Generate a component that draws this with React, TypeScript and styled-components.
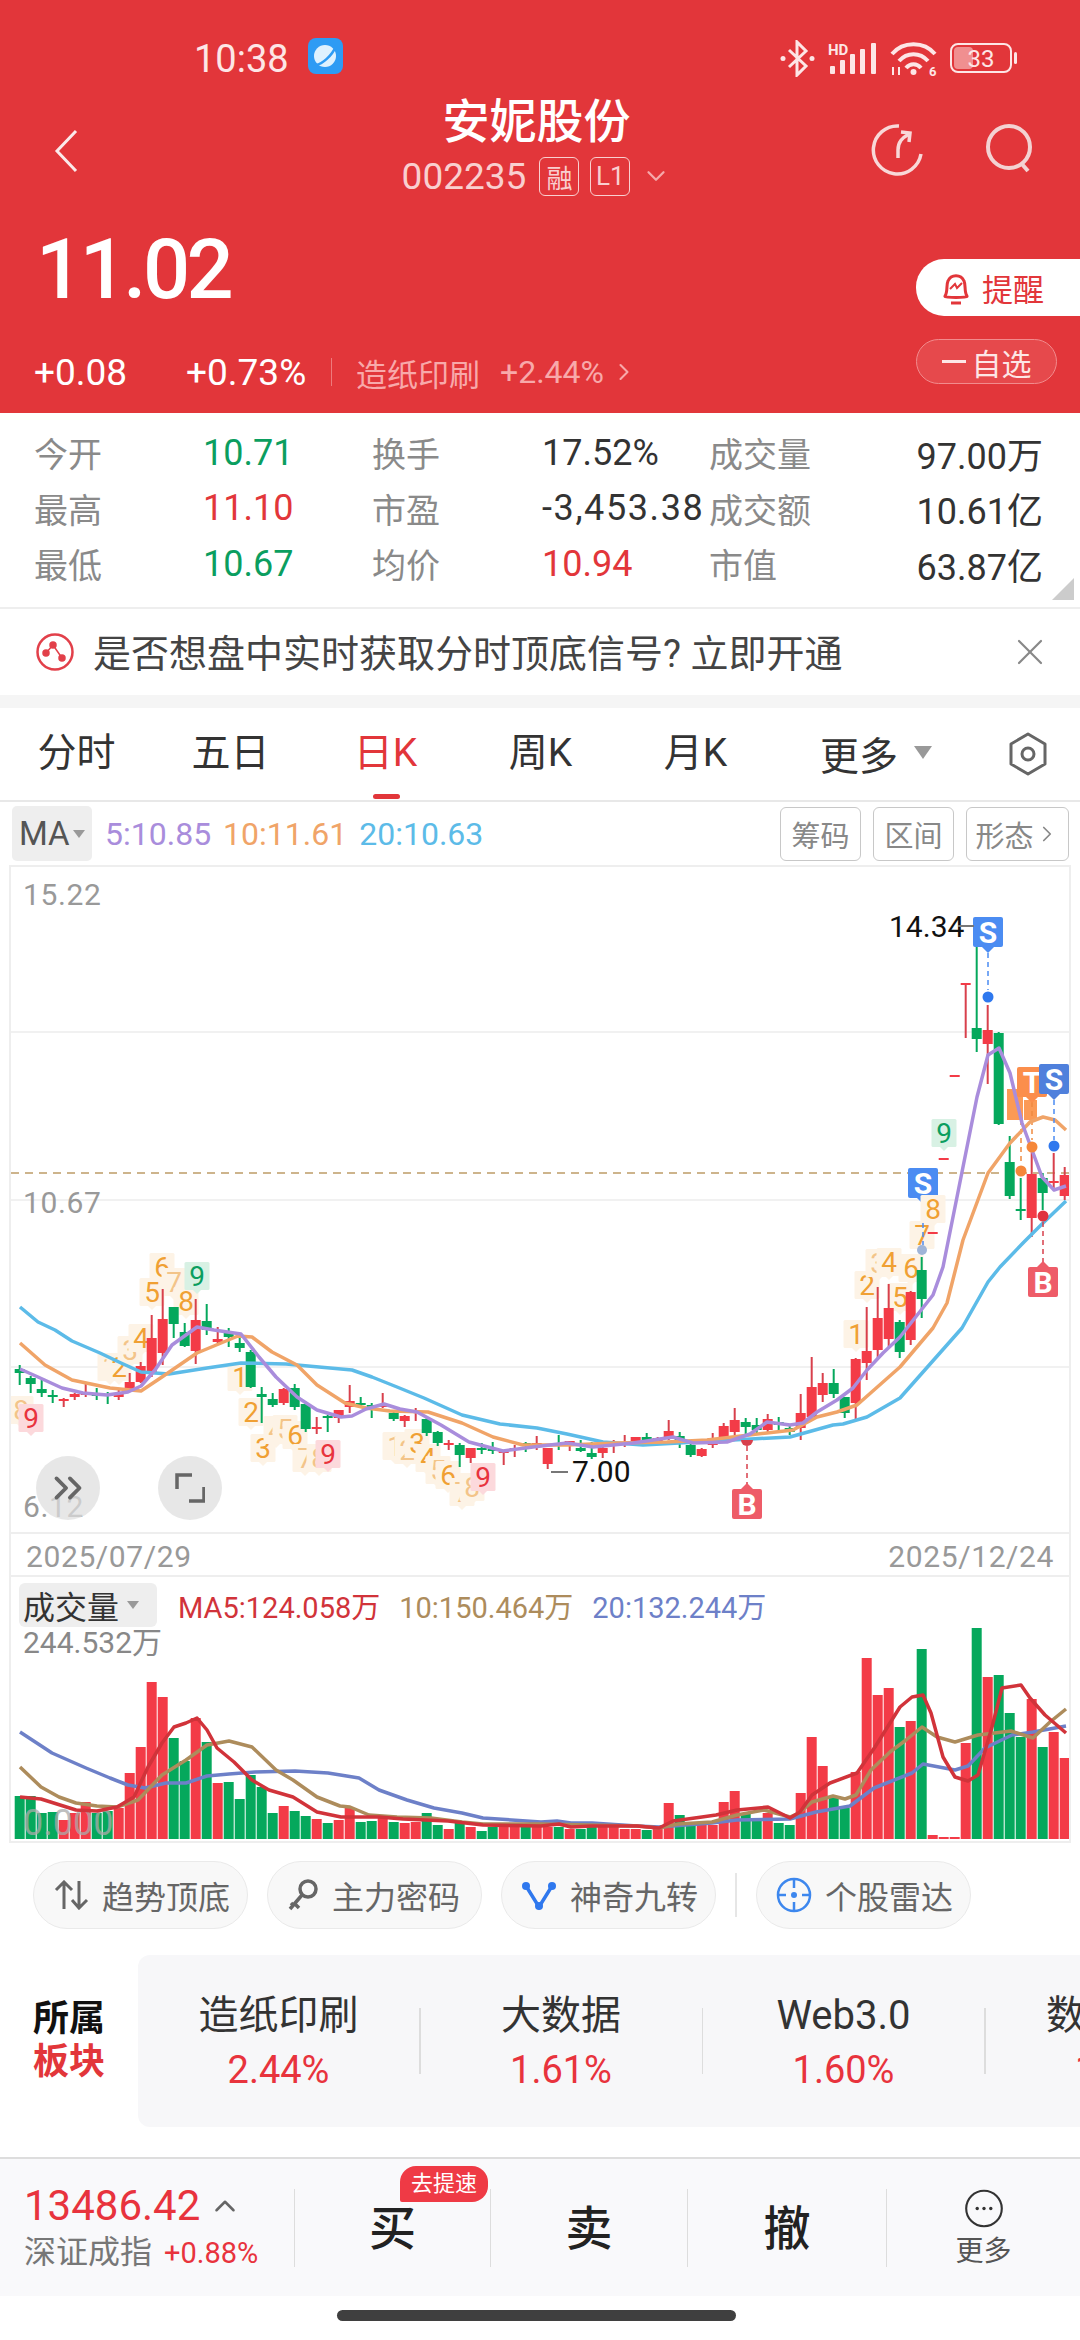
import styled, { createGlobalStyle } from 'styled-components';
import { ChevronDown, ChevronRight, ChevronUp, ChevronsRight, X } from 'lucide-react';

const RED = '#e2363a';
const UP = '#f33b47';
const DOWN = '#05a85c';

const GlobalStyle = createGlobalStyle`
    html, body {
        margin: 0;
        padding: 0;
        background: #fff;
    }
    body {
        font-family: Roboto, "Noto Sans CJK SC", sans-serif;
        color: #333;
    }
    * {
        box-sizing: border-box;
    }
`;

const Page = styled.div`
    width: 1080px;
    height: 2340px;
    overflow: hidden;
    background: #fff;
`;

/* ---------- header ---------- */

const Header = styled.header`
    height: 413px;
    background: ${RED};
    color: #fff;
    display: flex;
    flex-direction: column;
`;

const StatusBar = styled.div`
    height: 92px;
    padding: 38px 62px 0 194px;
    display: flex;
    align-items: flex-start;
`;

const Clock = styled.span`
    font-size: 38px;
    line-height: 42px;
    color: #fde6e6;
    margin-right: 19px;
`;

const StatusIcons = styled.div`
    margin-left: auto;
    display: flex;
    align-items: center;
    gap: 13px;
    height: 40px;
`;

const NavBar = styled.div`
    height: 110px;
    padding: 0 47px 0 54px;
    display: grid;
    grid-template-columns: 186px 1fr 200px;
    align-items: center;
`;

const BackIcon = styled.svg`
    margin-top: 8px;
`;

const NavIcons = styled.div`
    display: flex;
    justify-content: flex-end;
    gap: 62px;
    padding-top: 6px;
`;

const TitleBlock = styled.div`
    display: flex;
    flex-direction: column;
    align-items: center;
`;

const Title = styled.div`
    font-size: 47px;
    line-height: 58px;
    font-weight: 500;
    margin: -4px 0 4px;
`;

const CodeRow = styled.div`
    display: flex;
    align-items: center;
    height: 42px;
    color: #f9cfcf;
`;

const Code = styled.span`
    font-size: 37px;
    margin-right: 13px;
`;

const CodeBadge = styled.span`
    width: 40px;
    height: 39px;
    margin-right: 11px;
    border: 1.5px solid #f9cfcf;
    border-radius: 6px;
    display: flex;
    align-items: center;
    justify-content: center;
    font-size: 26px;
`;

const Quote = styled.div`
    flex: 1;
    display: flex;
    justify-content: space-between;
    padding-left: 34px;
`;

const QuoteLeft = styled.div`
    display: flex;
    flex-direction: column;
`;

const Price = styled.div`
    margin: 26px 0 0 2px;
    font-size: 83px;
    line-height: 83px;
    font-weight: 500;
    letter-spacing: -3.5px;
`;

const ChangeRow = styled.div`
    margin-top: 41px;
    display: flex;
    align-items: center;
    height: 40px;
`;

const Change = styled.span<{ $width: number }>`
    width: ${(p) => p.$width}px;
    font-size: 37px;
`;

const ChangeDivider = styled.span`
    width: 1px;
    height: 28px;
    margin: 0 24px 0 25px;
    background: #ee7a7c;
`;

const SectorLink = styled.span`
    font-size: 31px;
    color: #f8a9aa;
    display: flex;
    align-items: center;
`;

const SectorGain = styled.span`
    margin-left: 20px;
    font-size: 32px;
    margin-right: 6px;
`;

const QuoteRight = styled.div`
    padding-top: 57px;
    width: 164px;
    display: flex;
    flex-direction: column;
`;

const RemindPill = styled.div`
    height: 57px;
    background: #fff;
    color: ${RED};
    border-radius: 28px 0 0 28px;
    display: flex;
    align-items: center;
    padding-left: 24px;
    gap: 10px;
    font-size: 31px;
`;

const WatchPill = styled.div`
    width: 141px;
    height: 45px;
    margin-top: 23px;
    border: 1.5px solid #f28b8d;
    border-radius: 23px;
    background: #e6494c;
    color: #fde6e6;
    display: flex;
    align-items: center;
    justify-content: center;
    font-size: 30px;
    gap: 6px;
`;

const WatchMinus = styled.span`
    width: 24px;
    height: 3px;
    background: #fde6e6;
`;

/* ---------- stats ---------- */

const Stats = styled.section`
    position: relative;
    height: 194px;
    padding: 12px 37px 0 34px;
    display: grid;
    grid-template-columns: 169px 169px 170px 167px 160px 1fr;
    grid-auto-rows: 55.5px;
    align-items: center;
`;

const StatLabel = styled.span`
    font-size: 34px;
    color: #8a8a8a;
`;

const StatValue = styled.span<{ $tone?: 'up' | 'down'; $end?: boolean; $wide?: boolean }>`
    font-size: 36px;
    color: ${(p) => (p.$tone === 'up' ? RED : p.$tone === 'down' ? '#0b9e5f' : '#333')};
    text-align: ${(p) => (p.$end ? 'right' : 'left')};
    letter-spacing: ${(p) => (p.$wide ? '1.6px' : '0')};
    white-space: nowrap;
`;

const StatCorner = styled.span`
    position: absolute;
    right: 6px;
    bottom: 7px;
    border-style: solid;
    border-width: 0 0 22px 22px;
    border-color: transparent transparent #ccc transparent;
`;

/* ---------- banner ---------- */

const Banner = styled.section`
    height: 88px;
    border-top: 2px solid #eee;
    padding: 0 28px 0 36px;
    display: flex;
    align-items: center;
    margin-bottom: 13px;
    box-shadow: 0 13px 0 #f5f5f5;
`;

const BannerText = styled.span`
    margin: -4px 0 0 19px;
    font-size: 38px;
    color: #444;
    flex: 1;
    white-space: nowrap;
`;

/* ---------- period tabs ---------- */

const Tabs = styled.nav`
    height: 94px;
    border-bottom: 2px solid #e8e8e8;
    display: grid;
    grid-template-columns: 153px repeat(4, 155px) 1fr 18px 71px;
    align-items: center;
    font-size: 39px;
    color: #333;
`;

const Tab = styled.div<{ $active?: boolean }>`
    position: relative;
    height: 92px;
    line-height: 90px;
    text-align: center;
    color: ${(p) => (p.$active ? RED : '#333')};

    &::after {
        content: '';
        display: ${(p) => (p.$active ? 'block' : 'none')};
        position: absolute;
        left: 50%;
        bottom: 1px;
        width: 27px;
        height: 5px;
        margin-left: -13px;
        border-radius: 3px;
        background: ${RED};
    }
`;

const TabMore = styled.div`
    padding-left: 47px;
    margin-top: -3px;
    display: flex;
    align-items: center;
    gap: 16px;
    white-space: nowrap;
`;

const DownCaret = styled.span<{ $size: number }>`
    border-style: solid;
    border-width: ${(p) => p.$size}px ${(p) => p.$size * 0.75}px 0 ${(p) => p.$size * 0.75}px;
    border-color: #999 transparent transparent transparent;
`;

/* ---------- MA row ---------- */

const MaRow = styled.div`
    height: 63px;
    padding: 0 11px 0 12px;
    display: flex;
    align-items: center;
`;

const MaChip = styled.div`
    width: 80px;
    height: 55px;
    background: #eee;
    border-radius: 5px;
    display: flex;
    align-items: center;
    padding-left: 7px;
    gap: 3px;
    font-size: 33px;
    color: #555;
    margin-right: 13px;
`;

const MaValue = styled.span<{ $color: string }>`
    font-size: 32px;
    color: ${(p) => p.$color};
    margin-right: 12px;
`;

const ChartButtons = styled.div`
    margin-left: auto;
    display: flex;
    gap: 12px;
`;

const ChartButton = styled.div<{ $width: number }>`
    width: ${(p) => p.$width}px;
    height: 54px;
    border: 1.5px solid #c8c8c8;
    border-radius: 6px;
    display: flex;
    align-items: center;
    justify-content: center;
    font-size: 29px;
    color: #888;
`;

/* ---------- charts ---------- */

const ChartPanel = styled.section`
    position: relative;
    height: 712px;
    margin: 0 9px;
    border: 2px solid #eee;
`;

const ChartSvg = styled.svg`
    display: block;
`;

const RoundButton = styled.div<{ $left: number }>`
    position: absolute;
    left: ${(p) => p.$left}px;
    top: 589px;
    width: 64px;
    height: 64px;
    border-radius: 50%;
    background: rgba(222, 222, 222, 0.72);
    display: flex;
    align-items: center;
    justify-content: center;
    color: #666;
`;

const AxisText = styled.text`
    font-size: 30px;
    fill: #999;
    letter-spacing: 0.6px;
`;

const ExtremeText = styled.text`
    font-size: 30px;
    fill: #111;
`;

const TagDigit = styled.text<{ $color: string }>`
    font-size: 28px;
    text-anchor: middle;
    fill: ${(p) => p.$color};
`;

const SignalLetter = styled.text`
    font-size: 30px;
    font-weight: 700;
    text-anchor: middle;
    fill: #fff;
`;

const VolumePanel = styled.section`
    margin: 0 9px;
    height: 266px;
    border: solid #eee;
    border-width: 0 2px 2px;
`;

const VolumeHeader = styled.div`
    height: 50px;
    padding: 6px 0 0 8px;
    display: flex;
    align-items: center;
`;

const VolumeChip = styled.div`
    width: 138px;
    height: 44px;
    margin-right: 21px;
    background: #eee;
    border-radius: 6px;
    display: flex;
    align-items: center;
    padding-left: 4px;
    gap: 8px;
    font-size: 32px;
    color: #333;
`;

const VolumeValue = styled.span<{ $color: string }>`
    font-size: 29px;
    color: ${(p) => p.$color};
    margin-right: 19px;
`;

const VolumeMax = styled.text`
    font-size: 30px;
    fill: #888;
`;

const VolumeZero = styled.text`
    font-size: 36px;
    fill: #aaa;
    fill-opacity: 0.75;
`;

/* ---------- tool pills ---------- */

const ToolRow = styled.div`
    margin-top: 18px;
    height: 68px;
    padding-left: 33px;
    display: flex;
    align-items: center;
    gap: 19px;
`;

const ToolPill = styled.div`
    width: 215px;
    height: 68px;
    border: 1.5px solid #eaeaea;
    border-radius: 34px;
    background: #f8f8f8;
    display: flex;
    align-items: center;
    padding-left: 19px;
    gap: 13px;
    font-size: 32px;
    color: #666;
    white-space: nowrap;
`;

const ToolDivider = styled.span`
    width: 2px;
    height: 44px;
    background: #e6e6e6;
`;

/* ---------- sectors ---------- */

const SectorRow = styled.section`
    margin-top: 26px;
    height: 172px;
    display: flex;
`;

const SectorHead = styled.div`
    width: 138px;
    padding-left: 33px;
    display: flex;
    flex-direction: column;
    justify-content: center;
    font-size: 36px;
    line-height: 43px;
    font-weight: 700;
    color: #111;
`;

const SectorHeadAccent = styled.span`
    color: ${RED};
`;

const SectorCard = styled.div`
    flex: 1;
    background: #f7f7f9;
    border-radius: 12px 0 0 12px;
    display: flex;
    align-items: center;
    overflow: hidden;
`;

const SectorItem = styled.div`
    flex: none;
    width: 281px;
    display: flex;
    flex-direction: column;
    align-items: center;
    white-space: nowrap;
`;

const SectorName = styled.span`
    font-size: 40px;
    line-height: 50px;
    color: #333;
`;

const SectorPct = styled.span`
    margin-top: 7px;
    font-size: 38px;
    line-height: 44px;
    color: #e8333d;
`;

const SectorDivider = styled.span`
    flex: none;
    width: 1.5px;
    height: 66px;
    background: #ddd;
`;

/* ---------- bottom bar ---------- */

const BottomBar = styled.footer`
    margin-top: 30px;
    height: 139px;
    border-top: 2px solid #ddd;
    background: #f9f9fb;
    display: flex;
    align-items: center;
`;

const IndexBlock = styled.div`
    width: 294px;
    padding-left: 24px;
    display: flex;
    flex-direction: column;
`;

const IndexValue = styled.div`
    font-size: 42px;
    line-height: 46px;
    color: #e8333d;
    display: flex;
    align-items: center;
    gap: 8px;
`;

const IndexName = styled.div`
    margin-top: 4px;
    display: flex;
    align-items: baseline;
    gap: 12px;
    font-size: 32px;
    line-height: 38px;
    color: #777;
`;

const IndexChange = styled.span`
    font-size: 29px;
    color: #e8333d;
`;

const Action = styled.div<{ $width: number }>`
    position: relative;
    width: ${(p) => p.$width}px;
    height: 78px;
    border-left: 1.5px solid #ddd;
    display: flex;
    flex-direction: column;
    align-items: center;
    justify-content: center;
    font-size: 47px;
    font-weight: 500;
    color: #222;
`;

const ActionLabel = styled.span`
    margin-top: -6px;
`;

const SpeedTag = styled.span`
    position: absolute;
    left: 105px;
    top: -23px;
    width: 88px;
    height: 36px;
    border-radius: 16px 16px 16px 2px;
    background: #ef3a45;
    color: #fff;
    font-size: 22px;
    font-weight: 400;
    line-height: 36px;
    text-align: center;
`;

const MoreLabel = styled.span`
    margin-top: 9px;
    font-size: 28px;
    line-height: 30px;
    font-weight: 400;
    color: #555;
`;

const HomeZone = styled.div`
    height: 44px;
    padding: 14px 7px 0 0;
    display: flex;
    justify-content: center;
`;

const HomePill = styled.span`
    width: 399px;
    height: 11px;
    border-radius: 6px;
    background: #3f3f3f;
`;

/* ---------- data ---------- */

type Candle = [number, number, number, number, 'r' | 'g'];

const candles: Candle[] = [
    [1365, 1369, 1373, 1385, 'g'], [1376, 1378, 1384, 1393, 'g'], [1380, 1389, 1393, 1397, 'g'], [1390, 1395, 1397, 1403, 'g'],
    [1398, 1399, 1401, 1407, 'r'], [1393, 1394, 1397, 1400, 'r'], [1382, 1393, 1395, 1397, 'r'], [1388, 1393, 1396, 1400, 'g'],
    [1392, 1394, 1396, 1404, 'g'], [1388, 1393, 1397, 1400, 'r'], [1373, 1382, 1391, 1392, 'r'], [1362, 1366, 1382, 1383, 'r'],
    [1315, 1338, 1372, 1377, 'r'], [1289, 1319, 1353, 1365, 'r'], [1307, 1307, 1324, 1338, 'g'], [1323, 1332, 1346, 1347, 'g'],
    [1299, 1320, 1351, 1364, 'r'], [1304, 1321, 1330, 1335, 'g'], [1327, 1339, 1342, 1343, 'r'], [1328, 1333, 1337, 1347, 'g'],
    [1337, 1343, 1348, 1352, 'g'], [1350, 1352, 1387, 1388, 'g'], [1387, 1394, 1397, 1423, 'g'], [1393, 1399, 1405, 1407, 'g'],
    [1388, 1389, 1403, 1405, 'r'], [1384, 1388, 1407, 1410, 'g'], [1403, 1404, 1429, 1432, 'g'], [1417, 1427, 1429, 1434, 'r'],
    [1415, 1416, 1417, 1432, 'g'], [1410, 1410, 1418, 1423, 'r'], [1385, 1401, 1407, 1413, 'r'], [1397, 1403, 1405, 1408, 'g'],
    [1403, 1405, 1406, 1418, 'g'], [1393, 1405, 1407, 1408, 'r'], [1412, 1413, 1419, 1421, 'g'], [1415, 1416, 1421, 1427, 'r'],
    [1408, 1411, 1413, 1421, 'r'], [1418, 1419, 1433, 1436, 'g'], [1431, 1432, 1443, 1446, 'g'], [1440, 1443, 1445, 1450, 'r'],
    [1443, 1445, 1455, 1467, 'g'], [1448, 1448, 1458, 1463, 'r'], [1443, 1448, 1450, 1454, 'g'], [1442, 1449, 1451, 1454, 'g'],
    [1450, 1451, 1452, 1465, 'r'], [1445, 1448, 1450, 1457, 'r'], [1442, 1443, 1445, 1452, 'g'], [1436, 1443, 1446, 1450, 'r'],
    [1448, 1448, 1464, 1469, 'r'], [1435, 1444, 1446, 1450, 'g'], [1441, 1441, 1443, 1451, 'r'], [1440, 1448, 1451, 1452, 'g'],
    [1442, 1453, 1457, 1459, 'g'], [1447, 1448, 1453, 1458, 'r'], [1440, 1443, 1445, 1453, 'r'], [1435, 1442, 1445, 1447, 'r'],
    [1437, 1437, 1442, 1445, 'r'], [1433, 1437, 1441, 1445, 'g'], [1437, 1438, 1443, 1445, 'r'], [1420, 1431, 1438, 1440, 'r'],
    [1432, 1436, 1442, 1448, 'g'], [1440, 1445, 1455, 1457, 'g'], [1448, 1449, 1456, 1457, 'r'], [1433, 1438, 1445, 1448, 'r'],
    [1423, 1426, 1437, 1440, 'r'], [1408, 1420, 1432, 1435, 'r'], [1418, 1422, 1427, 1437, 'g'], [1418, 1425, 1430, 1433, 'g'],
    [1414, 1419, 1430, 1432, 'r'], [1417, 1422, 1425, 1432, 'g'], [1425, 1428, 1432, 1435, 'g'], [1394, 1413, 1428, 1440, 'r'],
    [1357, 1387, 1417, 1420, 'r'], [1373, 1383, 1395, 1402, 'r'], [1369, 1383, 1394, 1398, 'g'], [1397, 1397, 1413, 1418, 'g'],
    [1358, 1359, 1403, 1420, 'r'], [1307, 1351, 1363, 1380, 'r'], [1287, 1318, 1350, 1360, 'r'], [1284, 1308, 1339, 1348, 'r'],
    [1320, 1322, 1352, 1358, 'g'], [1291, 1292, 1340, 1345, 'r'], [1257, 1270, 1299, 1318, 'g'], [1232, 1232, 1233, 1234, 'r'],
    [1158, 1158, 1159, 1159, 'r'], [1075, 1075, 1076, 1076, 'r'], [983, 983, 984, 1038, 'r'], [928, 1028, 1039, 1052, 'g'],
    [1005, 1030, 1044, 1084, 'r'], [1032, 1033, 1124, 1125, 'g'], [1136, 1162, 1196, 1199, 'g'], [1178, 1209, 1211, 1220, 'g'],
    [1147, 1174, 1218, 1237, 'r'], [1173, 1178, 1193, 1210, 'g'], [1153, 1181, 1183, 1190, 'r'], [1167, 1175, 1196, 1200, 'r'],
];

const volumeTops = [
    1796, 1796, 1813, 1812, 1820, 1813, 1802, 1813, 1811, 1808, 1773, 1747, 1682, 1697, 1738, 1761,
    1718, 1742, 1783, 1782, 1799, 1775, 1787, 1813, 1806, 1811, 1816, 1819, 1823, 1820, 1808, 1822,
    1821, 1817, 1822, 1823, 1822, 1813, 1825, 1829, 1822, 1827, 1831, 1827, 1827, 1826, 1827, 1827,
    1827, 1827, 1829, 1829, 1827, 1827, 1827, 1829, 1829, 1830, 1829, 1803, 1815, 1823, 1825, 1825,
    1802, 1791, 1813, 1820, 1813, 1823, 1825, 1793, 1737, 1766, 1798, 1808, 1772, 1658, 1695, 1688,
    1727, 1721, 1649, 1835, 1837, 1837, 1743, 1628, 1677, 1675, 1713, 1737, 1699, 1747, 1732, 1758,
];

const volumeColors =
    'ggggrrrggrrrrrggrgrgggggrggrgrrggrgrrggrgrggrrgr' + 'rgrggrrrrgrrggrrrrggrggrrrggrrrrgrgrrrrgrgggrgrr';

const candleX = (i: number) => 19.7 + 11 * i;

const ma20 = '20,1307 38,1322 55,1330 72,1341 100,1353 121,1363 141,1372 169,1374 207,1368 241,1363 286,1364 352,1370 372,1377 397,1387 424,1398 462,1415 500,1424 537,1428 567,1434 603,1442 643,1445 733,1440 790,1437 833,1425 843,1424 867,1417 900,1398 962,1328 988,1282 1000,1267 1023,1243 1043,1223 1066,1201';
const ma10 = '20,1343 45,1365 72,1380 110,1388 141,1391 162,1377 197,1353 238,1336 252,1337 272,1352 297,1365 317,1385 345,1403 366,1408 390,1411 428,1412 462,1423 493,1437 523,1445 567,1445 617,1443 667,1442 707,1440 767,1433 793,1430 817,1417 837,1412 857,1405 900,1367 933,1328 947,1303 963,1240 988,1173 1010,1143 1030,1122 1043,1117 1055,1120 1066,1130';
const ma5 = '20,1369 38,1377 62,1388 83,1393 107,1395 128,1392 141,1386 155,1370 172,1345 197,1327 214,1330 241,1334 259,1357 276,1377 297,1397 317,1410 341,1417 352,1416 366,1409 384,1404 400,1409 417,1412 441,1425 469,1442 503,1451 533,1447 567,1443 593,1447 633,1443 673,1437 693,1443 727,1442 750,1434 767,1422 790,1425 803,1423 817,1412 837,1400 853,1388 867,1370 883,1353 900,1337 907,1328 933,1295 943,1267 957,1197 977,1097 988,1055 999,1048 1010,1073 1022,1123 1042,1177 1054,1190 1066,1186';

const volMa5 = '20,1797 41,1799 76,1810 97,1811 117,1807 134,1797 148,1767 162,1743 174,1727 186,1723 197,1718 207,1730 217,1748 234,1762 252,1780 269,1790 293,1797 317,1812 341,1817 379,1817 403,1819 448,1821 483,1825 541,1826 559,1824 571,1827 592,1826 637,1826 659,1828 673,1821 702,1817 716,1815 737,1810 768,1807 790,1818 800,1812 812,1795 830,1783 857,1773 875,1747 900,1707 912,1697 923,1695 931,1713 943,1757 955,1777 968,1781 978,1775 992,1727 1002,1688 1021,1685 1030,1698 1045,1715 1066,1733';
const volMa10 = '20,1767 41,1787 59,1797 76,1803 97,1806 117,1807 138,1800 162,1775 186,1760 207,1745 229,1741 252,1747 276,1770 293,1780 317,1797 340,1806 350,1807 369,1815 397,1817 431,1818 462,1822 483,1824 541,1824 637,1826 659,1828 678,1824 712,1822 737,1815 764,1810 790,1817 799,1813 812,1802 833,1796 845,1799 856,1795 871,1770 890,1752 906,1740 922,1727 937,1737 955,1742 978,1735 1011,1731 1033,1738 1050,1722 1066,1709';
const volMa20 = '20,1732 52,1753 86,1768 110,1778 128,1785 145,1788 166,1783 186,1783 207,1776 229,1774 255,1772 295,1771 328,1773 359,1778 379,1790 407,1800 434,1808 462,1813 483,1818 541,1822 557,1821 571,1823 592,1823 637,1826 659,1827 712,1823 737,1820 790,1819 816,1812 850,1806 874,1788 912,1773 923,1764 955,1770 968,1766 985,1748 1012,1735 1033,1732 1066,1726';

type TagKind = 'solid' | 'faint' | 'red' | 'green';

const digitTags: [string, number, number, TagKind][] = [
    ['8', 21, 1410, 'faint'], ['9', 31, 1418, 'red'],
    ['1', 110, 1367, 'faint'], ['2', 119, 1367, 'solid'], ['3', 130, 1350, 'faint'], ['4', 141, 1338, 'solid'],
    ['5', 152, 1292, 'solid'], ['6', 162, 1267, 'solid'], ['7', 174, 1282, 'faint'], ['8', 186, 1301, 'solid'], ['9', 197, 1276, 'green'],
    ['1', 240, 1377, 'solid'], ['2', 251, 1412, 'solid'], ['3', 263, 1448, 'solid'], ['4', 276, 1430, 'faint'], ['5', 285, 1429, 'faint'],
    ['6', 295, 1435, 'solid'], ['7', 305, 1458, 'faint'], ['8', 319, 1458, 'faint'], ['9', 328, 1454, 'red'],
    ['1', 395, 1446, 'faint'], ['2', 407, 1450, 'faint'], ['3', 417, 1443, 'solid'], ['4', 428, 1458, 'solid'], ['5', 438, 1470, 'faint'],
    ['6', 448, 1475, 'solid'], ['7', 462, 1492, 'faint'], ['8', 472, 1487, 'faint'], ['9', 483, 1477, 'red'],
    ['1', 856, 1334, 'solid'], ['2', 867, 1285, 'solid'], ['3', 878, 1263, 'faint'], ['4', 889, 1262, 'solid'],
    ['5', 900, 1297, 'solid'], ['6', 911, 1268, 'solid'], ['7', 922, 1235, 'solid'], ['9', 944, 1133, 'green'],
];

const tagColors: Record<TagKind, { bg: string; fg: string }> = {
    solid: { bg: '#fdf3e6', fg: '#f0a033' },
    faint: { bg: '#fdf3e6', fg: '#f3c489' },
    red: { bg: '#fcd9dc', fg: '#e8333d' },
    green: { bg: '#d8f1e4', fg: '#0b9e5f' },
};

// signal tag: a rounded square with a small pointer on the top or bottom edge
const SignalTag = ({ x, y, letter, fill, pointUp }: { x: number; y: number; letter: string; fill: string; pointUp?: boolean }) => (
    <g>
        <rect x={x - 15} y={y - 15} width={30} height={30} rx={2} fill={fill} />
        <path
            d={pointUp ? `M${x - 6} ${y - 15}L${x} ${y - 21}L${x + 6} ${y - 15}Z` : `M${x - 6} ${y + 15}L${x} ${y + 21}L${x + 6} ${y + 15}Z`}
            fill={fill}
        />
        <SignalLetter x={x} y={y + 11}>{letter}</SignalLetter>
    </g>
);

const DigitTag = ({ digit, x, y, kind }: { digit: string; x: number; y: number; kind: TagKind }) => (
    <g>
        <rect x={x - 12.5} y={y - 14} width={25} height={28} rx={1.5} fill={tagColors[kind].bg} />
        <path d={`M${x - 4} ${y + 14}L${x} ${y + 18}L${x + 4} ${y + 14}Z`} fill={tagColors[kind].bg} />
        <TagDigit x={x} y={y + 10} $color={tagColors[kind].fg}>{digit}</TagDigit>
    </g>
);

const PriceChart = () => (
    <ChartSvg width={1058} height={708} viewBox="11 867 1058 708">
        {[1032, 1200, 1367].map((y) => (
            <line key={y} x1={11} x2={1069} y1={y} y2={y} stroke="#f1f1f1" strokeWidth={2} />
        ))}
        <line x1={11} x2={1069} y1={1533} y2={1533} stroke="#eee" strokeWidth={2} />
        <line x1={11} x2={1069} y1={1173} y2={1173} stroke="#cdb48c" strokeWidth={2} strokeDasharray="8 6" />
        <AxisText x={23} y={905}>15.22</AxisText>
        <AxisText x={23} y={1213}>10.67</AxisText>
        <AxisText x={23} y={1517}>6.12</AxisText>
        <AxisText x={26} y={1567}>2025/07/29</AxisText>
        <AxisText x={1054} y={1567} textAnchor="end">2025/12/24</AxisText>

        {digitTags.map(([digit, x, y, kind], i) => (
            <DigitTag key={i} digit={digit} x={x} y={y} kind={kind} />
        ))}

        {candles.map(([hi, top, bot, lo, side], i) => {
            const color = side === 'r' ? UP : DOWN;
            const x = candleX(i);
            return (
                <g key={i}>
                    <line x1={x} x2={x} y1={hi} y2={lo} stroke={side === 'r' ? '#d8404c' : DOWN} strokeWidth={2} />
                    <rect x={x - 5} y={top} width={10} height={Math.max(bot - top, 2)} fill={color} />
                </g>
            );
        })}

        <rect x={1007} y={1089} width={16} height={31} fill="#fb9a55" />
        <rect x={1024} y={1100} width={13} height={20} fill="#fb9a55" />
        <line x1={1021} x2={1021} y1={1120} y2={1162} stroke="#f08a40" strokeWidth={1.5} strokeDasharray="5 4" />
        <line x1={1032} x2={1032} y1={1102} y2={1140} stroke="#f08a40" strokeWidth={1.5} strokeDasharray="5 4" />

        <polyline points={ma20} fill="none" stroke="#5cbbe8" strokeWidth={3.5} strokeLinejoin="round" />
        <polyline points={ma10} fill="none" stroke="#f0a468" strokeWidth={3.5} strokeLinejoin="round" />
        <polyline points={ma5} fill="none" stroke="#a98ddc" strokeWidth={3.5} strokeLinejoin="round" />

        <line x1={988} x2={988} y1={953} y2={990} stroke="#4b8cf2" strokeWidth={1.5} strokeDasharray="5 4" />
        <line x1={1054} x2={1054} y1={1100} y2={1140} stroke="#4b8cf2" strokeWidth={1.5} strokeDasharray="5 4" />
        <line x1={1043} x2={1043} y1={1222} y2={1262} stroke="#d8404c" strokeWidth={1.5} strokeDasharray="5 4" />
        <line x1={747} x2={747} y1={1446} y2={1484} stroke="#d8404c" strokeWidth={1.5} strokeDasharray="5 4" />
        <line x1={923} x2={923} y1={1205} y2={1245} stroke="#4b8cf2" strokeWidth={1.5} strokeDasharray="5 4" />

        <circle cx={988} cy={997} r={5.5} fill="#2f78ee" />
        <circle cx={1054} cy={1146} r={5.5} fill="#2f78ee" />
        <circle cx={1021} cy={1171} r={5.5} fill="#f5873a" />
        <circle cx={1032} cy={1147} r={5.5} fill="#f5873a" />
        <circle cx={1043} cy={1216} r={5.5} fill="#e0323f" />
        <circle cx={922} cy={1250} r={5} fill="#9fb4d8" />
        <path d="M741 1440a6 6 0 0 0 12 0Z" fill="#d8404c" />

        <SignalTag x={988} y={932} letter="S" fill="#4b8cf2" />
        <SignalTag x={923} y={1183} letter="S" fill="#4b8cf2" />
        <SignalTag x={1032} y={1082} letter="T" fill="#fb8e4c" />
        <SignalTag x={1054} y={1079} letter="S" fill="#4f80dc" />
        <SignalTag x={1043} y={1282} letter="B" fill="#ee5c68" pointUp />
        <SignalTag x={747} y={1504} letter="B" fill="#ee5c68" pointUp />
        <DigitTag digit="8" x={933} y={1209} kind="solid" />

        <ExtremeText x={889} y={937}>14.34</ExtremeText>
        <line x1={958} x2={974} y1={926} y2={926} stroke="#777" strokeWidth={2} />
        <line x1={551} x2={568} y1={1472} y2={1472} stroke="#777" strokeWidth={2} />
        <ExtremeText x={572} y={1482}>7.00</ExtremeText>
    </ChartSvg>
);

const VolumeChart = () => (
    <ChartSvg width={1058} height={214} viewBox="11 1627 1058 214">
        {volumeTops.map((top, i) => (
            <rect
                key={i}
                x={candleX(i) - 5}
                y={top}
                width={10}
                height={1839 - top}
                fill={volumeColors[i] === 'r' ? UP : DOWN}
            />
        ))}
        <VolumeMax x={23} y={1653}>244.532万</VolumeMax>
        <VolumeZero x={23} y={1835}>0.000</VolumeZero>
        <polyline points={volMa20} fill="none" stroke="#6d80c8" strokeWidth={3.5} strokeLinejoin="round" />
        <polyline points={volMa10} fill="none" stroke="#ad8c5c" strokeWidth={3.5} strokeLinejoin="round" />
        <polyline points={volMa5} fill="none" stroke="#d1333a" strokeWidth={3.5} strokeLinejoin="round" />
    </ChartSvg>
);

/* ---------- icons ---------- */

const PlanetIcon = () => (
    <svg width={35} height={36} viewBox="0 0 35 36">
        <rect width={35} height={36} rx={8} fill="#2e9bf4" />
        <circle cx={17} cy={18} r={11} fill="#dff1fe" />
        <path d="M8 27C14 26 24 18 28 8" fill="none" stroke="#2e9bf4" strokeWidth={2.5} />
    </svg>
);

const BluetoothIcon = () => (
    <svg width={35} height={37} viewBox="0 0 35 37" fill="none" stroke="#fde6e6" strokeWidth={3}>
        <path d="M9 10L26 26L17 35V2L26 11L9 27" />
        <circle cx={3} cy={18.5} r={2.5} fill="#fde6e6" stroke="none" />
        <circle cx={32} cy={18.5} r={2.5} fill="#fde6e6" stroke="none" />
    </svg>
);

const SignalIcon = () => (
    <svg width={49} height={31} viewBox="0 0 49 31" fill="#fde6e6">
        <text x={0} y={12} fontSize={15} fontWeight={700}>HD</text>
        <rect x={2} y={23} width={5} height={8} rx={1} />
        <rect x={12} y={17} width={5} height={14} rx={1} />
        <rect x={22} y={11} width={5} height={20} rx={1} />
        <rect x={32} y={6} width={5} height={25} rx={1} />
        <rect x={43} y={0} width={5} height={31} rx={1} />
    </svg>
);

const WifiIcon = () => (
    <svg width={47} height={35} viewBox="0 0 47 35" fill="none" stroke="#fde6e6" strokeWidth={4}>
        <path d="M2 13C13 0 34 0 45 13" />
        <path d="M9 20C17 11 30 11 38 20" />
        <path d="M16 27C20 22 27 22 31 27" />
        <circle cx={23.5} cy={31} r={3} fill="#fde6e6" stroke="none" />
        <path d="M3 26V34M9 26V34" strokeWidth={2} />
        <text x={39} y={35} fontSize={13} fontWeight={700} fill="#fde6e6" stroke="none">6</text>
    </svg>
);

const BatteryIcon = () => (
    <svg width={68} height={30} viewBox="0 0 68 30" fill="none">
        <rect x={1} y={1} width={60} height={28} rx={7} stroke="#fde6e6" strokeWidth={2} />
        <rect x={4} y={4} width={19} height={22} rx={4} fill="#f08f90" />
        <rect x={64} y={9} width={3} height={12} rx={1.5} fill="#fde6e6" />
        <text x={31} y={24} fontSize={24} textAnchor="middle" fill="#fde6e6">33</text>
    </svg>
);

const RefreshIcon = () => (
    <svg width={52} height={54} viewBox="0 0 52 54" fill="none" stroke="#f8d8d8" strokeWidth={3.5}>
        <path d="M28 3A24 24 0 1 0 50 31" />
        <path d="M27 35V27C27 19 31 15 38 11" />
        <path d="M30 9L39 10L38 19" />
    </svg>
);

const SearchIcon = () => (
    <svg width={48} height={50} viewBox="0 0 48 50" fill="none" stroke="#f3d2d2" strokeWidth={4}>
        <circle cx={24} cy={24} r={21} />
        <path d="M36 40L43 48" />
    </svg>
);

const BellIcon = () => (
    <svg width={32} height={34} viewBox="0 0 32 34" fill="none" stroke={RED} strokeWidth={3}>
        <path d="M5 25C8 21 6 14 8 10C11 3 21 3 24 10C26 14 24 21 27 25C29 27 3 27 5 25Z" />
        <path d="M11 32H21" />
        <path d="M10 18L15 13L17 17L22 12" strokeWidth={2} />
    </svg>
);

const SignalBannerIcon = () => (
    <svg width={38} height={38} viewBox="0 0 38 38" fill="none" stroke="#e2404a" strokeWidth={2.5}>
        <circle cx={19} cy={19} r={17.5} />
        <path d="M10 20L17 12L26 25" strokeWidth={1.5} />
        <circle cx={10} cy={20} r={2.5} fill="#e2404a" />
        <circle cx={17} cy={12} r={2.5} fill="#e2404a" />
        <circle cx={26} cy={25} r={2.5} fill="#e2404a" />
    </svg>
);

const HexIcon = () => (
    <svg width={38} height={44} viewBox="0 0 38 44" fill="none" stroke="#666" strokeWidth={3}>
        <path d="M19 2L36 12V32L19 42L2 32V12Z" strokeLinejoin="round" />
        <circle cx={19} cy={22} r={6} />
    </svg>
);

const CropIcon = () => (
    <svg width={30} height={30} viewBox="0 0 30 30" fill="none" stroke="#666" strokeWidth={3.5}>
        <path d="M2 16V2H17" />
        <path d="M29 14V28H14" />
    </svg>
);

const TrendIcon = () => (
    <svg width={36} height={30} viewBox="0 0 36 30" fill="none" stroke="#666" strokeWidth={3}>
        <path d="M11 29V2M3 10L11 2L19 10" />
        <path d="M26 1V28M19 20L26 28L34 20" />
    </svg>
);

const KeyIcon = () => (
    <svg width={32} height={32} viewBox="0 0 32 32" fill="none" stroke="#666" strokeWidth={3.5}>
        <circle cx={21} cy={10} r={8} />
        <path d="M15 16L3 30M8 25L12 29M4 24L7 27" />
    </svg>
);

const NineIcon = () => (
    <svg width={36} height={32} viewBox="0 0 36 32" fill="none" stroke="#2f78ee" strokeWidth={3.5}>
        <path d="M5 7L18 28L31 7" />
        <circle cx={5} cy={7} r={4} fill="#2f78ee" stroke="none" />
        <circle cx={31} cy={7} r={4} fill="#2f78ee" stroke="none" />
        <circle cx={18} cy={27} r={4} fill="#2f78ee" stroke="none" />
    </svg>
);

const RadarIcon = () => (
    <svg width={36} height={36} viewBox="0 0 36 36" fill="none" stroke="#3d87ee" strokeWidth={2.5}>
        <circle cx={18} cy={18} r={16} />
        <path d="M18 1V11M18 25V35M1 18H10M26 18H35" />
        <circle cx={18} cy={18} r={3} fill="#3d87ee" stroke="none" />
    </svg>
);

const MoreIcon = () => (
    <svg width={46} height={46} viewBox="0 0 46 46" fill="none" stroke="#333" strokeWidth={2.5}>
        <circle cx={23} cy={23} r={21} />
        <circle cx={15} cy={23} r={2} fill="#333" stroke="none" />
        <circle cx={23} cy={23} r={2} fill="#333" stroke="none" />
        <circle cx={31} cy={23} r={2} fill="#333" stroke="none" />
    </svg>
);

/* ---------- page ---------- */

export default function App() {
    return (
        <Page>
            <GlobalStyle />
            <Header>
                <StatusBar>
                    <Clock>10:38</Clock>
                    <PlanetIcon />
                    <StatusIcons>
                        <BluetoothIcon />
                        <SignalIcon />
                        <WifiIcon />
                        <BatteryIcon />
                    </StatusIcons>
                </StatusBar>
                <NavBar>
                    <BackIcon width={24} height={44} viewBox="0 0 24 44" fill="none" stroke="#fbeaea" strokeWidth={3}>
                        <path d="M22 2L3 22L22 42" />
                    </BackIcon>
                    <TitleBlock>
                        <Title>安妮股份</Title>
                        <CodeRow>
                            <Code>002235</Code>
                            <CodeBadge>融</CodeBadge>
                            <CodeBadge>L1</CodeBadge>
                            <ChevronDown size={30} strokeWidth={1.8} color="#f5a9aa" />
                        </CodeRow>
                    </TitleBlock>
                    <NavIcons>
                        <RefreshIcon />
                        <SearchIcon />
                    </NavIcons>
                </NavBar>
                <Quote>
                    <QuoteLeft>
                        <Price>11.02</Price>
                        <ChangeRow>
                            <Change $width={152}>+0.08</Change>
                            <Change $width={120}>+0.73%</Change>
                            <ChangeDivider />
                            <SectorLink>
                                造纸印刷
                                <SectorGain>+2.44%</SectorGain>
                                <ChevronRight size={28} strokeWidth={1.8} />
                            </SectorLink>
                        </ChangeRow>
                    </QuoteLeft>
                    <QuoteRight>
                        <RemindPill>
                            <BellIcon />
                            提醒
                        </RemindPill>
                        <WatchPill>
                            <WatchMinus />
                            自选
                        </WatchPill>
                    </QuoteRight>
                </Quote>
            </Header>

            <Stats>
                <StatLabel>今开</StatLabel>
                <StatValue $tone="down">10.71</StatValue>
                <StatLabel>换手</StatLabel>
                <StatValue>17.52%</StatValue>
                <StatLabel>成交量</StatLabel>
                <StatValue $end>97.00万</StatValue>
                <StatLabel>最高</StatLabel>
                <StatValue $tone="up">11.10</StatValue>
                <StatLabel>市盈</StatLabel>
                <StatValue $wide>-3,453.38</StatValue>
                <StatLabel>成交额</StatLabel>
                <StatValue $end>10.61亿</StatValue>
                <StatLabel>最低</StatLabel>
                <StatValue $tone="down">10.67</StatValue>
                <StatLabel>均价</StatLabel>
                <StatValue $tone="up">10.94</StatValue>
                <StatLabel>市值</StatLabel>
                <StatValue $end>63.87亿</StatValue>
                <StatCorner />
            </Stats>

            <Banner>
                <SignalBannerIcon />
                <BannerText>是否想盘中实时获取分时顶底信号? 立即开通</BannerText>
                <X size={44} strokeWidth={1.2} color="#888" />
            </Banner>

            <Tabs>
                <Tab>分时</Tab>
                <Tab>五日</Tab>
                <Tab $active>日K</Tab>
                <Tab>周K</Tab>
                <Tab>月K</Tab>
                <TabMore>
                    更多
                    <DownCaret $size={13} />
                </TabMore>
                <span />
                <HexIcon />
            </Tabs>

            <MaRow>
                <MaChip>
                    MA
                    <DownCaret $size={8} />
                </MaChip>
                <MaValue $color="#a98ddc">5:10.85</MaValue>
                <MaValue $color="#f0a468">10:11.61</MaValue>
                <MaValue $color="#5cbbe8">20:10.63</MaValue>
                <ChartButtons>
                    <ChartButton $width={81}>筹码</ChartButton>
                    <ChartButton $width={81}>区间</ChartButton>
                    <ChartButton $width={103}>
                        形态
                        <ChevronRight size={26} strokeWidth={1.6} />
                    </ChartButton>
                </ChartButtons>
            </MaRow>

            <ChartPanel>
                <PriceChart />
                <RoundButton $left={25}>
                    <ChevronsRight size={46} strokeWidth={2} />
                </RoundButton>
                <RoundButton $left={147}>
                    <CropIcon />
                </RoundButton>
            </ChartPanel>

            <VolumePanel>
                <VolumeHeader>
                    <VolumeChip>
                        成交量
                        <DownCaret $size={8} />
                    </VolumeChip>
                    <VolumeValue $color="#d1333a">MA5:124.058万</VolumeValue>
                    <VolumeValue $color="#ad8c5c">10:150.464万</VolumeValue>
                    <VolumeValue $color="#6d80c8">20:132.244万</VolumeValue>
                </VolumeHeader>
                <VolumeChart />
            </VolumePanel>

            <ToolRow>
                <ToolPill>
                    <TrendIcon />
                    趋势顶底
                </ToolPill>
                <ToolPill>
                    <KeyIcon />
                    主力密码
                </ToolPill>
                <ToolPill>
                    <NineIcon />
                    神奇九转
                </ToolPill>
                <ToolDivider />
                <ToolPill>
                    <RadarIcon />
                    个股雷达
                </ToolPill>
            </ToolRow>

            <SectorRow>
                <SectorHead>
                    <span>所属</span>
                    <SectorHeadAccent>板块</SectorHeadAccent>
                </SectorHead>
                <SectorCard>
                    <SectorItem>
                        <SectorName>造纸印刷</SectorName>
                        <SectorPct>2.44%</SectorPct>
                    </SectorItem>
                    <SectorDivider />
                    <SectorItem>
                        <SectorName>大数据</SectorName>
                        <SectorPct>1.61%</SectorPct>
                    </SectorItem>
                    <SectorDivider />
                    <SectorItem>
                        <SectorName>Web3.0</SectorName>
                        <SectorPct>1.60%</SectorPct>
                    </SectorItem>
                    <SectorDivider />
                    <SectorItem>
                        <SectorName>数据要素</SectorName>
                        <SectorPct>1.55%</SectorPct>
                    </SectorItem>
                </SectorCard>
            </SectorRow>

            <BottomBar>
                <IndexBlock>
                    <IndexValue>
                        13486.42
                        <ChevronUp size={34} strokeWidth={1.8} color="#666" />
                    </IndexValue>
                    <IndexName>
                        深证成指
                        <IndexChange>+0.88%</IndexChange>
                    </IndexName>
                </IndexBlock>
                <Action $width={196}>
                    <ActionLabel>买</ActionLabel>
                    <SpeedTag>去提速</SpeedTag>
                </Action>
                <Action $width={197}>
                    <ActionLabel>卖</ActionLabel>
                </Action>
                <Action $width={199}>
                    <ActionLabel>撤</ActionLabel>
                </Action>
                <Action $width={194}>
                    <MoreIcon />
                    <MoreLabel>更多</MoreLabel>
                </Action>
            </BottomBar>

            <HomeZone>
                <HomePill />
            </HomeZone>
        </Page>
    );
}
